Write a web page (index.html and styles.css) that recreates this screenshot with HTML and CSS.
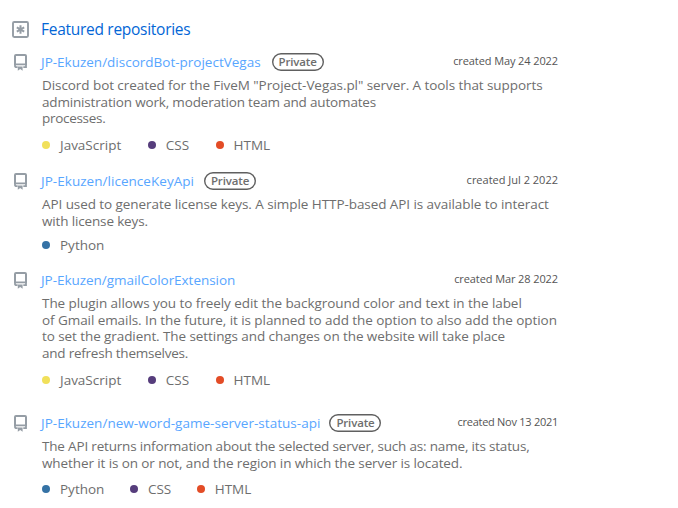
FILE: index.html
```html
<!DOCTYPE html>
<html lang="en">
<head>
<meta charset="utf-8">
<title>Featured repositories</title>
<link rel="stylesheet" href="styles.css">
</head>
<body>
<svg class="defs" width="0" height="0" aria-hidden="true">
  <symbol id="repo" viewBox="0 0 13 17">
    <path d="M1 11V2Q1 1 2 1H11Q12 1 12 2V11" fill="none" stroke="#959da5" stroke-width="2"/>
    <path d="M1 10.3H12V13.2H9.3M3.6 13.2H2.4Q1 13.2 1 12V10.3" fill="none" stroke="#959da5" stroke-width="1.8"/>
    <path d="M3.8 12.4H8.6V16.7L6.2 15L3.8 16.7Z" fill="#959da5"/>
  </symbol>
</svg>
<main class="panel">
  <header class="heading">
    <svg class="star-icon" viewBox="0 0 17 17"><rect x="1" y="1" width="15" height="15" rx="1.2" fill="none" stroke="#959da5" stroke-width="1.9"/><path d="M8.5 4.2v8.6M4.8 6.4l7.4 4.2M12.2 6.4l-7.4 4.2" stroke="#959da5" stroke-width="2"/></svg>
    <h1>Featured repositories</h1>
  </header>
  <article class="repo vegas">
    <div class="top"><svg class="repo-icon"><use href="#repo"/></svg><a class="name">JP-Ekuzen/discordBot-projectVegas</a><span class="badge">Private</span><time>created May 24 2022</time></div>
    <p><span>Discord bot created for the FiveM "Project-Vegas.pl" server. A tools that supports</span><span>administration work, moderation team and automates</span><span>processes.</span></p>
    <ul><li class="js">JavaScript</li><li class="css">CSS</li><li class="html">HTML</li></ul>
  </article>
  <article class="repo licence">
    <div class="top"><svg class="repo-icon"><use href="#repo"/></svg><a class="name">JP-Ekuzen/licenceKeyApi</a><span class="badge">Private</span><time>created Jul 2 2022</time></div>
    <p><span>API used to generate license keys. A simple HTTP-based API is available to interact</span><span>with license keys.</span></p>
    <ul><li class="python">Python</li></ul>
  </article>
  <article class="repo gmail">
    <div class="top"><svg class="repo-icon"><use href="#repo"/></svg><a class="name">JP-Ekuzen/gmailColorExtension</a><time>created Mar 28 2022</time></div>
    <p><span>The plugin allows you to freely edit the background color and text in the label</span><span>of Gmail emails. In the future, it is planned to add the option to also add the option</span><span>to set the gradient. The settings and changes on the website will take place</span><span>and refresh themselves.</span></p>
    <ul><li class="js">JavaScript</li><li class="css">CSS</li><li class="html">HTML</li></ul>
  </article>
  <article class="repo game">
    <div class="top"><svg class="repo-icon"><use href="#repo"/></svg><a class="name">JP-Ekuzen/new-word-game-server-status-api</a><span class="badge">Private</span><time>created Nov 13 2021</time></div>
    <p><span>The API returns information about the selected server, such as: name, its status,</span><span>whether it is on or not, and the region in which the server is located.</span></p>
    <ul><li class="python">Python</li><li class="css">CSS</li><li class="html">HTML</li></ul>
  </article>
</main>
</body>
</html>
```
FILE: styles.css
```css
* { box-sizing: border-box; }
body { margin: 0; background: #fff; color: #6e6e6e; font: 13.5px/16.5px "Open Sans", "Noto Sans", sans-serif; overflow: hidden; }
.defs { display: block; }
.panel { width: 558px; padding-top: 19px; }
.heading { display: flex; align-items: center; height: 20px; padding-left: 12px; margin-bottom: 13px; }
.star-icon { width: 17px; height: 17px; margin-right: 12px; }
h1 { margin: 0; font-size: 15.5px; font-weight: 400; line-height: 20px; letter-spacing: -.28px; color: #0366d6; }
.top { display: flex; align-items: center; height: 20px; padding-left: 14px; white-space: nowrap; }
.repo-icon { width: 13px; height: 17px; margin-right: 14px; }
.name { color: #58a6ff; }
.badge { width: 52px; height: 18px; margin-left: 11px; box-shadow: inset 0 0 0 1.4px #606060; border-radius: 9px; font-size: 11.5px; font-weight: 600; line-height: 17px; letter-spacing: -.15px; text-align: center; }
time { margin-left: auto; padding-bottom: 1px; font-size: 11px; letter-spacing: -.1px; color: #555; }
p { margin: 5px 0 0 42px; letter-spacing: -.07px; }
p span { display: block; white-space: nowrap; }
ul { display: flex; gap: 26.5px; margin: 11px 0 0 42px; padding: 0; list-style: none; height: 16px; line-height: 16px; }
li { display: flex; align-items: center; }
li::before { content: ""; width: 8px; height: 8px; margin-right: 10px; border-radius: 50%; background: currentColor; }
.js::before { background: #f1e05a; }
.css::before { background: #563d7c; }
.html::before { background: #e34c26; }
.python::before { background: #3572a5; }
.vegas { height: 119px; }
.vegas ul { margin-top: 10px; }
.vegas p span:nth-child(2) { letter-spacing: -.17px; }
.vegas p span:nth-child(3) { letter-spacing: -.3px; }
.licence { height: 99px; }
.licence .name { letter-spacing: .04px; }
.licence .badge { margin-left: 10px; }
.licence time { letter-spacing: 0; }
.licence ul { margin-top: 8px; }
.licence p span:nth-child(2) { letter-spacing: -.15px; }
.gmail { height: 143px; }
.gmail .name { letter-spacing: -.04px; }
.gmail p span:nth-child(1) { letter-spacing: -.06px; }
.gmail p span:nth-child(3) { letter-spacing: -.08px; }
.gmail p span:nth-child(4) { letter-spacing: -.23px; }
.game .name { letter-spacing: .03px; }
.game .badge { margin-left: 9px; }
.game time { letter-spacing: -.27px; }
.game p span:nth-child(1) { letter-spacing: -.18px; }
.game p span:nth-child(2) { letter-spacing: -.1px; }
.game ul { gap: 25.5px; margin-top: 10px; }
```
